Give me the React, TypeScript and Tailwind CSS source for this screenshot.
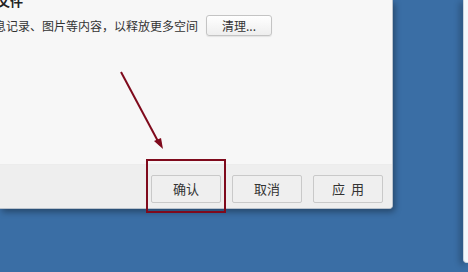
export default function App() {
  const cjk = { fontFamily: '"Noto Sans CJK SC", "Noto Sans", sans-serif' };
  return (
    <div className="relative flex h-[272px] w-[468px] overflow-hidden bg-[#3a6ea5]" style={cjk}>
      <div className="flex h-[209px] w-[393px] flex-col overflow-hidden rounded-br-[4px] border-r border-b border-[#b9c2cc] bg-[#f7f7f7] shadow-[2px_3px_6px_rgba(0,0,0,0.35)]">
        <div className="flex flex-1 flex-col">
          <div className="-mt-[6px] -ml-[3px] text-[13px] font-bold leading-[14px] text-[#222]">文件</div>
          <div className="mt-[7px] flex items-center">
            <span className="-ml-[6px] text-[12px] leading-[16px] text-[#333]">
              息记录、图片等内容，以释放更多空间
            </span>
            <button className="ml-[8px] h-[21px] w-[66px] rounded-[3px] border border-[#c4c4c4] bg-gradient-to-b from-[#ffffff] to-[#eeeeee] text-[12px] leading-[18px] text-[#333] shadow-[0_1px_1px_rgba(0,0,0,0.08)]">
              清理...
            </button>
          </div>
        </div>
        <div className="flex h-[44px] items-start justify-end gap-[11px] border-t border-[#ececec] bg-[#eeeeee] pt-[10px] pr-[9px]">
          <button className="h-[28px] w-[70px] rounded-[2px] border border-[#c9c9c9] bg-[#efefef] text-[13px] text-[#333]">
            确认
          </button>
          <button className="h-[28px] w-[70px] rounded-[2px] border border-[#c9c9c9] bg-[#efefef] text-[13px] text-[#333]">
            取消
          </button>
          <button className="flex h-[28px] w-[70px] items-center justify-center gap-[6px] rounded-[2px] border border-[#c9c9c9] bg-[#efefef] text-[13px] text-[#333]">
            <span>应</span>
            <span>用</span>
          </button>
        </div>
      </div>
      <div className="ml-auto h-[263px] w-[5px] rounded-bl-[4px] border-l border-b border-[#c9d3de] bg-[#f4f8fc] shadow-[-3px_2px_6px_rgba(0,0,0,0.3)]" />

      <div className="absolute left-[146px] top-[159px] h-[54px] w-[80px] border-2 border-[#7f0a1c]" />
      <svg className="absolute left-0 top-0" width="468" height="272">
        <line x1="121" y1="72" x2="160" y2="145" stroke="#7f0a1c" strokeWidth="2" />
        <polygon points="163,149 154,141 161,138" fill="#7f0a1c" />
      </svg>
    </div>
  );
}
